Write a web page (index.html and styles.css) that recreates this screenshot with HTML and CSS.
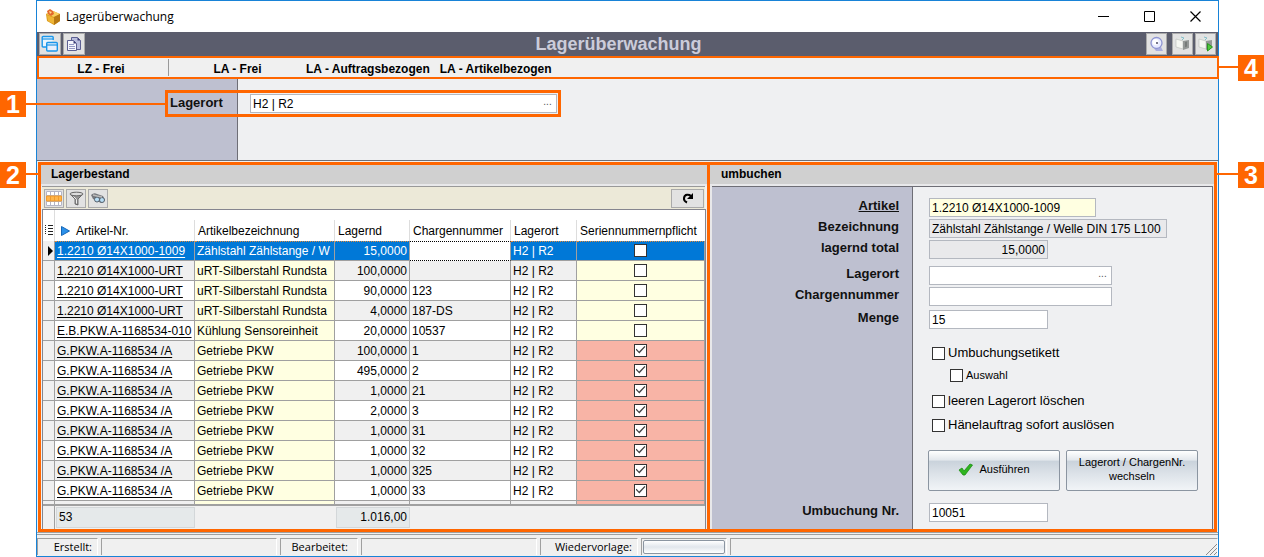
FILE: index.html
```html
<!DOCTYPE html>
<html lang="de">
<head>
<meta charset="utf-8">
<title>Lagerüberwachung</title>
<link rel="stylesheet" href="styles.css">
</head>
<body>
<div class="window">
  <header class="titlebar">
    <svg class="app-icon" width="16" height="16" viewBox="0 0 16 16"><path d="M1 5l7-3 7 3v7l-6 4-7-4z" fill="#d99a1c"/><path d="M1 5l7-3 7 3-6 3z" fill="#f7cf5e"/><path d="M9 8l6-3v7l-6 4z" fill="#b87912"/><path d="M2 6l7 3v6l-6-3z" fill="#eeb536"/><path d="M2 2l3-2 3 2 1 3-3 2-3-2z" fill="#e2682b"/><path d="M4 2l3 1-2 2z" fill="#ffd98a"/></svg>
    <span class="window-title">Lagerüberwachung</span>
    <div class="window-controls">
      <button type="button" aria-label="Minimieren"><svg width="11" height="11"><path d="M0 5.500h11" stroke="#000"/></svg></button>
      <button type="button" aria-label="Maximieren"><svg width="11" height="11"><path d="M.5.5h10v10h-10z" fill="none" stroke="#000"/></svg></button>
      <button type="button" aria-label="Schließen"><svg width="11" height="11"><path d="M.5.5l10 10M10.500.5l-10 10" stroke="#000" stroke-width="1.200"/></svg></button>
    </div>
  </header>

  <div class="toolbar">
    <button type="button" class="tool" aria-label="Fenster"><svg width="18" height="18" viewBox="0 0 18 18"><path d="M5 12H2.200q-1 0-1-1V2.500q0-1 1-1h9q1 0 1 1V5" fill="#eaf5fd" stroke="#1b96ea" stroke-width="1.400"/><path d="M1.500 4h10.500" stroke="#1b96ea" stroke-width="1.200"/><rect x="5.700" y="7.500" width="10.600" height="8.500" rx="1" fill="#e8effb" stroke="#1b96ea" stroke-width="1.400"/><path d="M6 10h10" stroke="#1b96ea" stroke-width="1.200"/></svg></button>
    <button type="button" class="tool" aria-label="Kopieren"><svg width="18" height="18" viewBox="0 0 18 18"><path d="M6.500 2.500h6l3 3v9h-9z" fill="#b9bddd" stroke="#5c5f92"/><path d="M12.500 2.500v3h3z" fill="#3c3e78"/><path d="M2.500 5.500h6l3 3v7h-9z" fill="#f6f7fd" stroke="#5c5f92"/><path d="M8.500 5.500v3h3z" fill="#3c3e78"/><path d="M4 9.500h5M4 11.500h6M4 13.500h6" stroke="#9498c4"/></svg></button>
    <h1 class="toolbar-title">Lagerüberwachung</h1>
    <button type="button" class="tool narrow" aria-label="Wecker"><svg width="18" height="18" viewBox="0 0 18 18"><path d="M5 12l8 0 2 4H8z" fill="#a9addf"/><circle cx="8.500" cy="8" r="5.500" fill="#e8ebff" stroke="#8f95d2" stroke-width="1.300"/><circle cx="7.500" cy="7" r="3" fill="#fff"/><path d="M8 8h2" stroke="#4a4a66" stroke-width="1.500"/></svg></button>
    <button type="button" class="tool narrow spaced" aria-label="Paket"><svg width="18" height="18" viewBox="0 0 18 18"><path d="M2 4l5-2 8 2-5 2z" fill="#e2e6e4"/><path d="M2 4l7 2v8l-7-2z" fill="#f6f7f2" stroke="#b9bcb9" stroke-width=".6"/><path d="M9 6l6-1v8l-6 2z" fill="#949896"/><path d="M11 7l2-.5v5l-2 .8z" fill="#777b79"/><path d="M7 2l3 1-2 2" fill="none" stroke="#86bfcb"/></svg></button>
    <button type="button" class="tool narrow" aria-label="Paket starten"><svg width="18" height="18" viewBox="0 0 18 18"><path d="M2 4l5-2 8 2-5 2z" fill="#e2e6e4"/><path d="M2 4l7 2v8l-7-2z" fill="#f6f7f2" stroke="#b9bcb9" stroke-width=".6"/><path d="M9 6l6-1v8l-6 2z" fill="#949896"/><path d="M7 2l3 1-2 2" fill="none" stroke="#86bfcb"/><path d="M10.500 8.500l5 3.500-5 4z" fill="#4fc83b" stroke="#2a9420"/></svg></button>
  </div>

  <nav class="menu">
    <button type="button" class="menu-zone">LZ - Frei</button>
    <button type="button" class="menu-free">LA - Frei</button>
    <button type="button">LA - Auftragsbezogen</button>
    <button type="button">LA - Artikelbezogen</button>
    <span class="callout-line line-4"></span><span class="callout tag-4">4</span>
  </nav>

  <section class="filter">
    <div class="filter-field">
      <label for="ort">Lagerort</label>
      <span class="picker"><input id="ort" type="text" value="H2 | R2"><button type="button" aria-label="Lagerort wählen">...</button></span>
    </div>
    <span class="callout-line line-1"></span><span class="callout tag-1">1</span>
  </section>

  <main class="panels">
    <section class="stock">
      <h2>Lagerbestand</h2>
      <div class="grid-tools">
        <button type="button" class="tool" aria-label="Spalten"><svg width="18" height="17" viewBox="0 0 18 17"><path d="M1 1h16v15H1z" fill="#fff"/><path d="M1 6h16v5H1z" fill="#ffb54a"/><path d="M1.500 1.500h15v14h-15zM5.500 1v15M9.500 1v15M13.500 1v15M1 5.500h16M1 11.500h16" fill="none" stroke="#b3b5c6"/><path d="M1.500 6h15v5h-15zM5.500 6v5M9.500 6v5M13.500 6v5" fill="none" stroke="#f09a2c"/></svg></button>
        <button type="button" class="tool" aria-label="Filter"><svg width="18" height="17" viewBox="0 0 18 17"><path d="M3 4l5 5v5l3 1v-6l5-5z" fill="#969696" stroke="#555" stroke-width=".8"/><ellipse cx="9.500" cy="4" rx="6.500" ry="1.800" fill="#dedede" stroke="#666"/><path d="M6.500 6.500l3 3v4" stroke="#eee" fill="none"/></svg></button>
        <button type="button" class="tool" aria-label="Suchen"><svg width="18" height="17" viewBox="0 0 18 17"><path d="M2 5q3-3 6-1l6 2 2 4-4 3-4-2-4-2z" fill="#75777c"/><circle cx="8" cy="9.500" r="2.500" fill="#b8ddf4" stroke="#55606c"/><circle cx="13" cy="10" r="2.500" fill="#b8ddf4" stroke="#55606c"/><path d="M4 5l4 1 5 1" stroke="#bbb" stroke-width="1.500" fill="none"/></svg></button>
        <button type="button" class="tool refresh" aria-label="Aktualisieren"><svg width="14" height="14" viewBox="0 0 14 14"><path d="M6 11.500Q2.500 10 3 7T6 3.800T10 5" fill="none" stroke="#000" stroke-width="2"/><path d="M12 2v6H6z"/></svg></button>
      </div>
      <div class="table-wrap">
      <table>
        <colgroup><col class="c-mark"><col class="c-nr"><col class="c-name"><col class="c-qty"><col class="c-lot"><col class="c-loc"><col></colgroup>
        <thead><tr>
          <th class="mark"><svg width="9" height="10"><path d="M3 .5h5M3 3.500h5M3 6.500h5M3 9.500h5" stroke="#222"/><path d="M0 .5h1M0 2.500h1M0 4.500h1M0 6.500h1M0 8.500h1" stroke="#222"/></svg></th>
          <th class="sorted"><div><svg width="9" height="10"><path d="M.5.5l8 4.500-8 4.500z" fill="#2b91ea" stroke="#1667b8"/></svg>Artikel-Nr.</div></th>
          <th><div>Artikelbezeichnung</div></th><th><div>Lagernd</div></th><th><div>Chargennummer</div></th><th><div>Lagerort</div></th><th><div>Seriennummernpflicht</div></th>
        </tr></thead>
        <tbody>
          <tr class="selected"><td class="mark"><svg width="5" height="10"><path d="M0 0l5 5-5 5z"/></svg></td><td><a href="#">1.2210 Ø14X1000-1009</a></td><td class="name">Zählstahl Zählstange / W</td><td class="num">15,0000</td><td class="editing"></td><td>H2 | R2</td><td class="serial"><input type="checkbox" aria-label="Seriennummernpflicht"></td></tr>
          <tr><td class="mark"></td><td><a href="#">1.2210 Ø14X1000-URT</a></td><td class="name">uRT-Silberstahl Rundsta</td><td class="num">100,0000</td><td></td><td>H2 | R2</td><td class="serial"><input type="checkbox" aria-label="Seriennummernpflicht"></td></tr>
          <tr><td class="mark"></td><td><a href="#">1.2210 Ø14X1000-URT</a></td><td class="name">uRT-Silberstahl Rundsta</td><td class="num">90,0000</td><td>123</td><td>H2 | R2</td><td class="serial"><input type="checkbox" aria-label="Seriennummernpflicht"></td></tr>
          <tr><td class="mark"></td><td><a href="#">1.2210 Ø14X1000-URT</a></td><td class="name">uRT-Silberstahl Rundsta</td><td class="num">4,0000</td><td>187-DS</td><td>H2 | R2</td><td class="serial"><input type="checkbox" aria-label="Seriennummernpflicht"></td></tr>
          <tr><td class="mark"></td><td><a href="#">E.B.PKW.A-1168534-010</a></td><td class="name">Kühlung Sensoreinheit</td><td class="num">20,0000</td><td>10537</td><td>H2 | R2</td><td class="serial"><input type="checkbox" aria-label="Seriennummernpflicht"></td></tr>
          <tr><td class="mark"></td><td><a href="#">G.PKW.A-1168534 /A</a></td><td class="name">Getriebe PKW</td><td class="num">100,0000</td><td>1</td><td>H2 | R2</td><td class="serial required"><input type="checkbox" checked aria-label="Seriennummernpflicht"></td></tr>
          <tr><td class="mark"></td><td><a href="#">G.PKW.A-1168534 /A</a></td><td class="name">Getriebe PKW</td><td class="num">495,0000</td><td>2</td><td>H2 | R2</td><td class="serial required"><input type="checkbox" checked aria-label="Seriennummernpflicht"></td></tr>
          <tr><td class="mark"></td><td><a href="#">G.PKW.A-1168534 /A</a></td><td class="name">Getriebe PKW</td><td class="num">1,0000</td><td>21</td><td>H2 | R2</td><td class="serial required"><input type="checkbox" checked aria-label="Seriennummernpflicht"></td></tr>
          <tr><td class="mark"></td><td><a href="#">G.PKW.A-1168534 /A</a></td><td class="name">Getriebe PKW</td><td class="num">2,0000</td><td>3</td><td>H2 | R2</td><td class="serial required"><input type="checkbox" checked aria-label="Seriennummernpflicht"></td></tr>
          <tr><td class="mark"></td><td><a href="#">G.PKW.A-1168534 /A</a></td><td class="name">Getriebe PKW</td><td class="num">1,0000</td><td>31</td><td>H2 | R2</td><td class="serial required"><input type="checkbox" checked aria-label="Seriennummernpflicht"></td></tr>
          <tr><td class="mark"></td><td><a href="#">G.PKW.A-1168534 /A</a></td><td class="name">Getriebe PKW</td><td class="num">1,0000</td><td>32</td><td>H2 | R2</td><td class="serial required"><input type="checkbox" checked aria-label="Seriennummernpflicht"></td></tr>
          <tr><td class="mark"></td><td><a href="#">G.PKW.A-1168534 /A</a></td><td class="name">Getriebe PKW</td><td class="num">1,0000</td><td>325</td><td>H2 | R2</td><td class="serial required"><input type="checkbox" checked aria-label="Seriennummernpflicht"></td></tr>
          <tr><td class="mark"></td><td><a href="#">G.PKW.A-1168534 /A</a></td><td class="name">Getriebe PKW</td><td class="num">1,0000</td><td>33</td><td>H2 | R2</td><td class="serial required"><input type="checkbox" checked aria-label="Seriennummernpflicht"></td></tr>
          <tr class="partial"><td class="mark"></td><td></td><td class="name"></td><td></td><td></td><td></td><td class="serial required"></td></tr>
        </tbody>
        <tfoot><tr><td class="mark"></td><td><div class="total">53</div></td><td></td><td><div class="total sum">1.016,00</div></td><td></td><td></td><td></td></tr></tfoot>
      </table>
      </div>
    </section>

    <section class="transfer">
      <h2>umbuchen</h2>
      <form class="form">
        <div class="row"><label for="artikel" class="linked">Artikel</label><input id="artikel" class="w-article" type="text" value="1.2210 Ø14X1000-1009"></div>
        <div class="row"><label for="bez">Bezeichnung</label><input id="bez" class="w-name" type="text" readonly value="Zählstahl Zählstange / Welle DIN 175 L100"></div>
        <div class="row"><label for="total">lagernd total</label><input id="total" class="w-short align-end" type="text" readonly value="15,0000"></div>
        <div class="row group"><label for="ziel">Lagerort</label><span class="picker w-mid"><input id="ziel" type="text"><button type="button" aria-label="Lagerort wählen">...</button></span></div>
        <div class="row"><label for="charge">Chargennummer</label><input id="charge" class="w-mid" type="text"></div>
        <div class="row near"><label for="menge">Menge</label><input id="menge" class="w-short" type="text" value="15"></div>
        <div class="options">
          <label><input type="checkbox">Umbuchungsetikett</label>
          <label class="sub"><input type="checkbox">Auswahl</label>
          <label><input type="checkbox">leeren Lagerort löschen</label>
          <label><input type="checkbox">Hänelauftrag sofort auslösen</label>
        </div>
        <div class="actions">
          <button type="button"><svg width="15" height="13" viewBox="0 0 15 13"><path d="M1 7l3-2 2 3 6-7 2.500 1L7 12H5z" fill="#2eb51f" stroke="#1f8d17" stroke-width=".8"/></svg>Ausführen</button>
          <button type="button">Lagerort / ChargenNr. wechseln</button>
        </div>
        <div class="row number"><label for="nr">Umbuchung Nr.</label><input id="nr" class="w-short" type="text" value="10051"></div>
      </form>
    </section>
    <span class="callout-line line-2"></span><span class="callout tag-2">2</span>
    <span class="callout-line line-3"></span><span class="callout tag-3">3</span>
  </main>

  <footer class="status">
    <span class="cell s-created">Erstellt:</span><span class="cell s-value"></span>
    <span class="cell s-edited">Bearbeitet:</span><span class="cell s-value"></span>
    <span class="cell s-follow">Wiedervorlage:</span><span class="cell s-button"><button type="button" aria-label="Wiedervorlage"></button></span>
    <span class="cell s-rest"><svg width="12" height="12"><path d="M1 12L12 1M5 12l7-7M9 12l3-3" stroke="#8c8c8c"/></svg></span>
  </footer>
</div>
</body>
</html>
```
FILE: styles.css
```css
* { box-sizing: border-box; }

body {
  margin: 0;
  padding: 0 45px 0 36px;
  background: #fff;
  color: #000;
  font: 12px/16px "Liberation Sans", Arial, sans-serif;
}

button, input { font: inherit; color: inherit; margin: 0; }
button { padding: 0; border: 0; background: none; }
svg { display: block; flex: none; }
h1, h2 { margin: 0; }

.window {
  display: flex;
  flex-direction: column;
  min-height: 100vh;
  border: 1px solid #1883d7;
  background: #f0f0f0;
}

/* Title bar */
.titlebar { display: flex; align-items: center; height: 31px; padding-left: 8px; background: #fff; }
.window-title { margin-left: 5px; font: 12px/16px "Open Sans", "Noto Sans", sans-serif; }
.window-controls { display: flex; margin-left: auto; }
.window-controls button { display: grid; place-items: center; width: 46px; height: 30px; }

/* Tool bar */
.toolbar { display: flex; align-items: center; gap: 2px; height: 24px; padding: 0 2px; background: #5b5d6d; }
.toolbar-title { flex: 1; padding-left: 6px; color: #cbccda; font-size: 18px; line-height: 22px; text-align: center; }
.tool { display: grid; place-items: center; width: 22px; height: 22px; border: 1px solid #aaa; background: #e2e2e2; }
.tool.narrow { width: 21px; }
.tool.spaced { margin-left: 3px; }

/* Menu strip */
.menu { position: relative; display: flex; align-items: center; height: 23px; border: 2px solid #f60; margin-right: -1px; }
.menu button { height: 17px; margin-right: 10px; padding-top: 3px; font-weight: bold; line-height: 14px; white-space: nowrap; }
.menu .menu-zone { width: 130px; margin: 0; padding-right: 5px; border-right: 1px solid #999; }
.menu .menu-free { width: 137px; margin: 0; }

/* Filter */
.filter {
  position: relative;
  height: 82px;
  padding: 11px 0 0 128px;
  border-bottom: 1px solid #6e6e76;
  background: linear-gradient(to right, #bec0d0 200px, #6e6e76 200px, #6e6e76 201px, #eff0f2 201px);
}
.filter-field { display: flex; width: 396px; height: 27px; padding: 1px 1px 1px 2px; border: 3px solid #f60; }
.filter-field label { width: 80px; color: #111; font-size: 13px; font-weight: bold; line-height: 17px; }
.filter-field .picker { flex: 1; }

input[type="text"] { min-width: 0; height: 19px; padding: 0 2px; border: 1px solid #b4b8c0; border-radius: 0; background: #fff; outline: 0; }
input[readonly] { background: #e9e9eb; }
.picker { display: flex; height: 19px; border: 1px solid #b4b8c0; background: #fff; }
.picker input[type="text"] { flex: 1; height: 17px; border: 0; }
.picker button { width: 17px; height: 13px; color: #555; font-size: 10px; line-height: 10px; }

/* Panels */
.panels { position: relative; flex: 1; display: grid; grid-template-columns: minmax(0, 669fr) minmax(0, 504fr); margin: 1px 1px 0; border: 3px solid #f60; }
.panels h2 { height: 21px; padding: 1px 10px 0; border-bottom: 2px solid #e8e8ea; background: #d0d0d0; font-size: 12px; line-height: 17px; }
.stock { border-right: 3px solid #f60; background: #f0f0f0; }
.grid-tools { display: flex; align-items: center; gap: 2px; height: 23px; margin: 0 2px 0 1px; padding: 0 1px 0 2px; border-top: 1px solid #999; background: #ece9d8; }
.grid-tools .tool { width: 20px; height: 19px; }
.grid-tools .refresh { width: 33px; margin-left: auto; }

.table-wrap { margin: 0 1px; border: 1px solid #85858f; border-bottom: 0; }
table { width: 100%; table-layout: fixed; border-collapse: separate; border-spacing: 0; }
.c-mark { width: 12px; }
.c-nr, .c-name { width: 140px; }
.c-qty { width: 75px; }
.c-lot { width: 101px; }
.c-loc { width: 66px; }

th { height: 31px; padding: 10px 0 0; background: #fff; font-weight: normal; text-align: left; white-space: nowrap; vertical-align: top; }
th div { height: 21px; padding: 3px 0 0 3px; border-right: 1px solid #ddd; overflow: hidden; }
th.sorted div { display: flex; align-items: center; gap: 6px; padding: 0 0 0 6px; }
th:last-child div { border: 0; }
th.mark { padding: 15px 0 0 2px; border-right: 1px solid #ddd; }

td { height: 20px; padding: 0 2px; border-right: 1px solid #a0a0a0; border-bottom: 1px solid #a0a0a0; background: #fff; line-height: 18px; white-space: nowrap; overflow: hidden; }
tbody tr:nth-child(even) td, tbody td.mark { background: #f0f0f0; }
tbody td.mark { padding: 0 0 0 5px; }
td a { display: block; overflow: hidden; color: inherit; text-decoration: underline; text-underline-offset: 2px; }
tbody tr td.name, tbody tr td.serial { background: #ffffe1; }
tbody tr td.required { background: #f8b4a6; }
td.num { text-align: right; }
td.serial { line-height: 16px; text-align: center; }
tbody tr.selected td:not(.mark) { border-top: 1px dotted #e08a3c; background: #0078d7; color: #fff; }
tbody tr.selected td.editing { border-top: 1px dotted #000; border-bottom: 1px dotted #000; background: #fff; }
tbody tr.partial td { height: 3px; padding: 0; border-bottom: 0; }
tfoot td { height: 25px; padding: 0 0 0 1px; border: 0; border-top: 2px solid #a0a0a0; background: #f0f0f0; }
tfoot td.mark { border-right: 1px solid #a0a0a0; }
.total { height: 21px; padding: 0 2px; border: 1px solid #d3d7d9; background: #e5e9ea; line-height: 19px; }
.total.sum { text-align: right; }

input[type="checkbox"] { display: inline-grid; place-items: center; flex: none; width: 13px; height: 13px; border: 1px solid #333; background: #fff; appearance: none; vertical-align: middle; }
td input[type="checkbox"] { display: grid; margin: 0 auto 1px; }
input[type="checkbox"]:checked::before { content: ""; width: 10px; height: 8px; background: #444; clip-path: polygon(0 45%, 10% 35%, 36% 68%, 90% 0, 100% 10%, 38% 95%); }

/* Transfer form */
.transfer { padding-right: 1px; background: #e8e8ea; }
.transfer h2 { margin-right: -1px; padding-left: 11px; }
.form {
  display: flex;
  flex-direction: column;
  gap: 2px;
  height: calc(100% - 21px);
  margin-left: 2px;
  padding-top: 11px;
  border: 1px solid #6e6e76;
  border-width: 1px 1px 0 0;
  background: linear-gradient(to right, #bec0d0 200px, #6e6e76 200px, #6e6e76 201px, #eff0f2 201px);
}
.row { display: grid; grid-template-columns: 187px 1fr; column-gap: 30px; height: 19px; }
.row label { color: #111; font-size: 13px; font-weight: bold; line-height: 15px; text-align: right; }
.row .linked { text-decoration: underline; }
.row.group { margin-top: 5px; }
.row.near { margin-top: 2px; }
.row.number { margin-top: 10px; }
.w-article { width: 167px; }
.w-name { width: 238px; }
.w-short { width: 119px; }
.w-mid { width: 183px; }
#artikel { background: #ffffe1; }
.align-end { text-align: right; }

.options { display: flex; flex-direction: column; margin: 10px 0 0 220px; font-size: 13px; }
.options label { display: flex; align-items: center; gap: 3px; height: 24px; }
.options .sub { padding: 0 0 4px 18px; font-size: 11px; }
.actions { display: flex; gap: 6px; margin: 11px 0 0 216px; }
.actions button {
  display: flex;
  align-items: center;
  justify-content: center;
  gap: 6px;
  width: 132px;
  height: 41px;
  padding: 0 8px 3px;
  border: 1px solid #8b95a1;
  border-radius: 2px;
  background: linear-gradient(#fff, #e2e7ec 24%, #c9d2db 25%, #dde3e9 60%, #f1f4f7);
  font-size: 11px;
  line-height: 14px;
}

/* Status bar */
.status { display: flex; gap: 3px; height: 24px; padding: 3px 0 1px; border-top: 3px double #a0a0a0; font: 11px/16px "Open Sans", "Noto Sans", sans-serif; }
.cell { border: 1px solid #a0a0a0; border-right-color: #fff; border-bottom: 0; text-align: right; white-space: nowrap; }
.s-created { width: 61px; padding-right: 5px; }
.s-value { width: 176px; }
.s-edited { width: 78px; padding-right: 9px; }
.s-follow { width: 98px; padding-right: 5px; }
.s-button { width: 86px; padding: 1px; }
.s-button button { display: block; width: 100%; height: 14px; border: 1px solid #8b95a1; border-radius: 2px; background: linear-gradient(#fff, #e1e6ec 50%, #fff); }
.s-rest { flex: 1; display: flex; align-items: flex-end; justify-content: flex-end; }

/* Numbered callouts placed over the window */
.callout { position: absolute; z-index: 1; width: 26px; height: 26px; background: #f60; color: #fff; font-size: 25px; font-weight: bold; line-height: 27px; text-align: center; }
.callout-line { position: absolute; z-index: 1; height: 2px; background: #f60; }
.tag-1 { left: -37px; top: 12px; }
.line-1 { left: -11px; top: 24px; width: 139px; }
.tag-2 { left: -41px; top: -3px; }
.line-2 { left: -15px; top: 8px; width: 15px; }
.tag-3 { right: -50px; top: -3px; }
.line-3 { right: -24px; top: 8px; width: 24px; }
.tag-4 { right: -47px; top: -3px; }
.line-4 { right: -21px; top: 8px; width: 21px; }
```
